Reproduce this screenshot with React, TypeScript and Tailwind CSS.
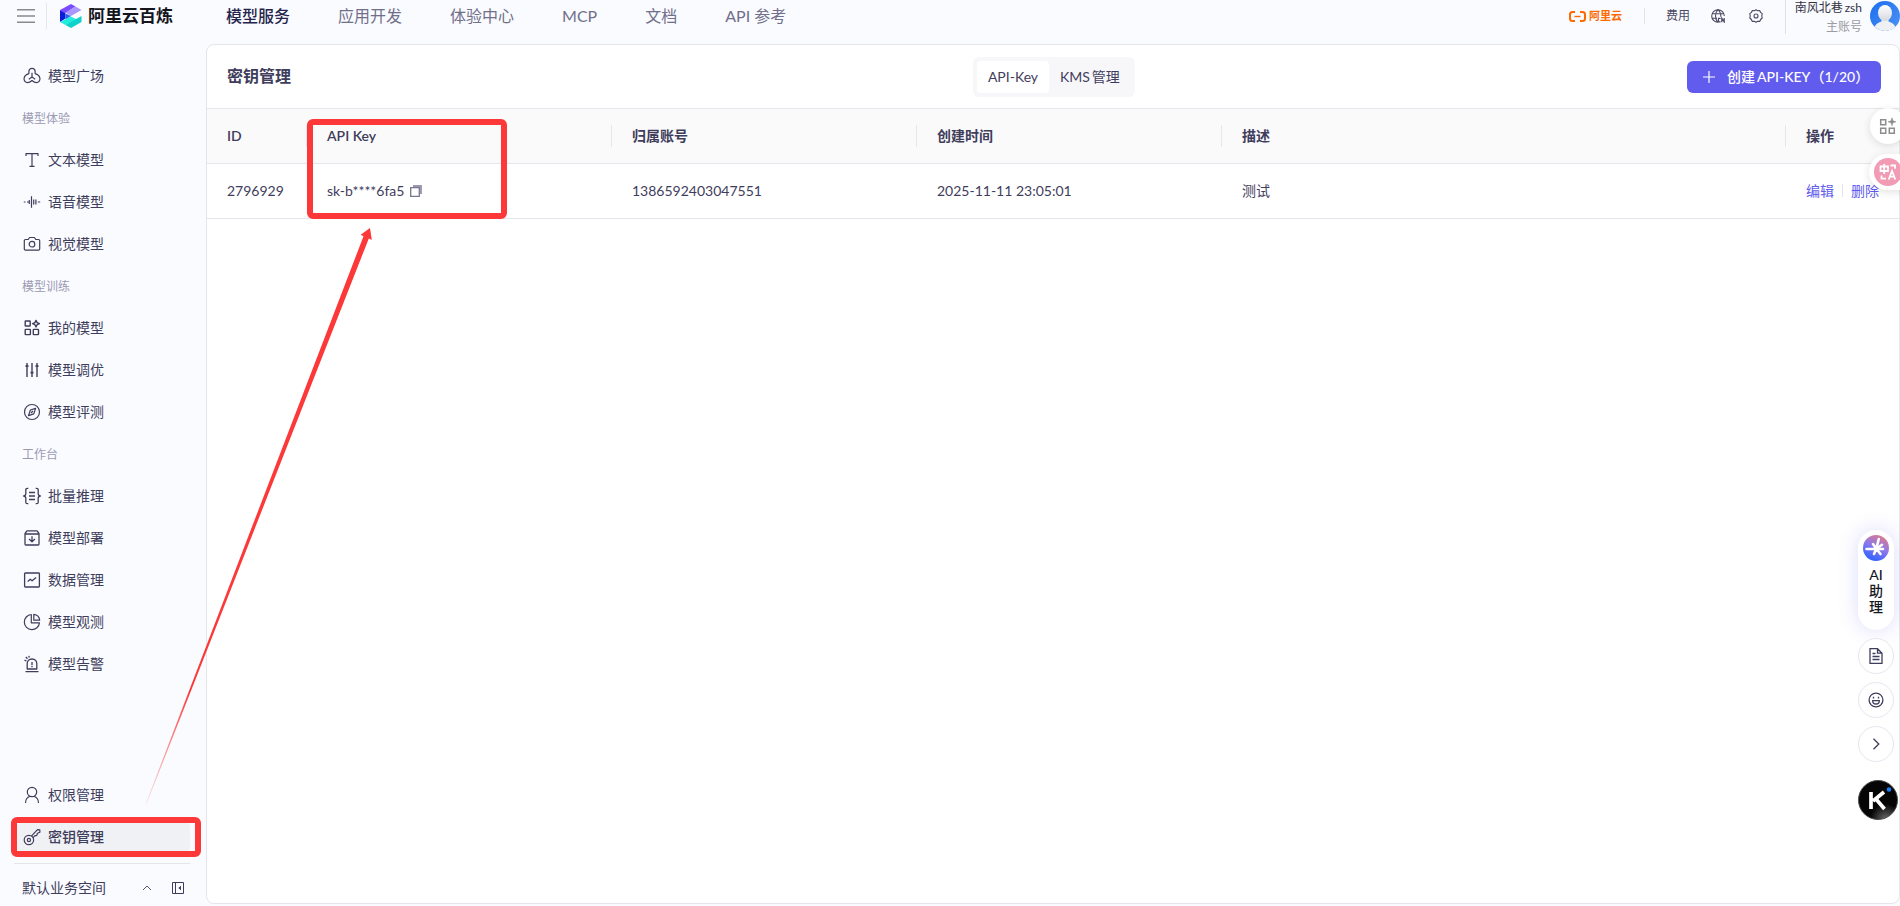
import React from "react";

type IconProps = { children: React.ReactNode; className?: string };

function Icon({ children, className = "" }: IconProps) {
  return (
    <svg
      viewBox="0 0 18 18"
      className={`h-[18px] w-[18px] shrink-0 ${className}`}
      fill="none"
      stroke="currentColor"
      strokeWidth="1.2"
      strokeLinejoin="round"
    >
      {children}
    </svg>
  );
}

const icons = {
  plaza: (
    <Icon>
      <path d="M5.900 6.600V4.300C5.900 2.500 7.200 1.300 9 1.300s3.100 1.200 3.100 3v2.300c2.200.6 4.400 2.300 4.800 4.600.4 2.700-1.300 4.400-3.500 4.400-1.700 0-2.800-.7-4.400-2.100-1.600 1.400-2.700 2.100-4.400 2.100-2.200 0-3.900-1.700-3.500-4.400.4-2.300 2.600-4 4.800-4.600z" />
      <path d="M9 5.800v4.200M9 10l-3.200 2.200M9 10l3.200 2.200" />
    </Icon>
  ),
  text: (
    <Icon>
      <path d="M3 5V2.600h12V5M9 2.600v12.800M6.500 15.400h5" />
    </Icon>
  ),
  voice: (
    <Icon>
      <path d="M.8 9h1.700M4 9h2M6.300 7v4M8.500 3.200v11.600M10.700 6.500v5M12.900 6.500v5M14.800 9h2.400" />
    </Icon>
  ),
  camera: (
    <Icon>
      <path d="M2.500 4.500h2.700l1.400-2h4.800l1.400 2h2.700c.7 0 1.200.5 1.200 1.200v8.300c0 .7-.5 1.200-1.200 1.200H2.500c-.7 0-1.200-.5-1.200-1.200V5.700c0-.7.5-1.200 1.200-1.200z" />
      <circle cx="9" cy="9.200" r="2.800" />
    </Icon>
  ),
  models: (
    <Icon>
      <g strokeWidth="1.400">
        <rect x="2.200" y="2" width="5" height="5" rx=".5" />
        <rect x="2.200" y="10.400" width="5.200" height="5.200" rx=".5" />
        <rect x="10.300" y="10.400" width="5.200" height="5.200" rx=".5" />
        <path d="M13 1.400l1.100 2.200 2.300 1-2.300 1.100-1.100 2.200-1.100-2.200-2.300-1.100 2.300-1z" />
      </g>
    </Icon>
  ),
  tune: (
    <Icon>
      <path d="M4 2v14M9 2v14M14 2v14" strokeWidth="1.400" />
      <path d="M2.500 5.200h3M7.500 11.700h3M12.500 5.200h3" strokeWidth="1.800" />
    </Icon>
  ),
  compass: (
    <Icon>
      <circle cx="9" cy="9" r="7.500" />
      <path d="M12.600 5.400L7.400 7 5.500 12.600l5.300-1.700z" />
      <path d="M8 10l2-2" />
    </Icon>
  ),
  batch: (
    <Icon>
      <g strokeWidth="1.300">
        <path d="M5.300 1.300H4.300c-1 0-1.500.6-1.500 1.500v4c0 1.200-.8 2-2.200 2.200 1.400.2 2.200 1 2.200 2.200v4c0 .9.500 1.500 1.500 1.500h1M12.700 1.300h1c1 0 1.500.6 1.500 1.500v4c0 1.200.8 2 2.200 2.200-1.400.2-2.200 1-2.200 2.200v4c0 .9-.5 1.500-1.500 1.500h-1M6 5.500h6M6 9h6M6 12.500h6" />
      </g>
    </Icon>
  ),
  deploy: (
    <Icon>
      <g strokeWidth="1.300">
        <path d="M2 4.700v10.400c0 .6.300.9.900.9h12.200c.6 0 .9-.3.900-.9V4.700L14.500 2.300c-.2-.3-.5-.4-.8-.4H4.300c-.3 0-.6.100-.8.400zM2 5h14M9 7.200v5.300M6 9.900l3 2.800 3-2.800" />
      </g>
    </Icon>
  ),
  data: (
    <Icon>
      <g strokeWidth="1.300">
        <rect x="1.600" y="2" width="14.800" height="14" rx=".8" />
        <path d="M4.700 10.600l2.500-2.400 1.900 1.600 4-3.200" />
      </g>
    </Icon>
  ),
  pie: (
    <Icon>
      <path d="M8.300 1.500a7.600 7.600 0 1 0 8.200 8.300H8.300z" />
      <path d="M10.800 1.300a6.700 6.700 0 0 1 5.900 5.900h-5.900z" />
    </Icon>
  ),
  alarm: (
    <Icon>
      <g strokeWidth="1.300">
        <path d="M4.200 14V8.600C4.200 6 6.200 4 9 4s4.800 2 4.800 4.600V14zM2.500 16.600h13M9 7v3.200M9 11v1.300M1.500 5.200l1.900.7M2.800 2l1.700 1.700M5.800 .8l.5 1.900" />
      </g>
    </Icon>
  ),
  user: (
    <Icon>
      <circle cx="9" cy="6" r="4.700" />
      <path d="M2.500 17c0-3.500 1.900-5.800 4.600-6.700M15.500 17c0-3.500-1.900-5.800-4.600-6.700" />
    </Icon>
  ),
  key: (
    <Icon>
      <circle cx="5.900" cy="12" r="4.700" />
      <circle cx="5.900" cy="12" r="1.600" />
      <path d="M8.400 8.100L14.500 1.600l2.300.2.100 2.400-2.400 1.100-.7 2-2.100.6L9.800 9.900" />
    </Icon>
  ),
};

function NavItem({ icon, label, active }: { icon: React.ReactNode; label: string; active?: boolean }) {
  return (
    <div
      className={`flex h-8 items-center gap-[7px] rounded-md pl-[9px] ${
        active ? "bg-[#f0f1f5] font-medium" : ""
      }`}
    >
      {icon}
      <span className="pb-px text-sm leading-5">{label}</span>
    </div>
  );
}

function NavHeading({ label }: { label: string }) {
  return <div className="flex h-8 items-center pt-[2px] pl-2 text-xs text-[#9c9ab3]">{label}</div>;
}

function HeaderCell({ width, label, last }: { width: string; label: string; last?: boolean }) {
  return (
    <div className={`flex shrink-0 items-center justify-between pl-5 ${width}`}>
      <span className="text-sm font-semibold">{label}</span>
      {!last && <span className="h-[22px] w-px bg-[#e6e6ec]" />}
    </div>
  );
}

function Sidebar() {
  return (
    <aside className="flex w-[206px] shrink-0 flex-col pr-4 pl-[14px] text-[#3f3d5c]">
      <nav className="flex flex-col gap-[10px] pt-4">
        <NavItem icon={icons.plaza} label="模型广场" />
        <NavHeading label="模型体验" />
        <NavItem icon={icons.text} label="文本模型" />
        <NavItem icon={icons.voice} label="语音模型" />
        <NavItem icon={icons.camera} label="视觉模型" />
        <NavHeading label="模型训练" />
        <NavItem icon={icons.models} label="我的模型" />
        <NavItem icon={icons.tune} label="模型调优" />
        <NavItem icon={icons.compass} label="模型评测" />
        <NavHeading label="工作台" />
        <NavItem icon={icons.batch} label="批量推理" />
        <NavItem icon={icons.deploy} label="模型部署" />
        <NavItem icon={icons.data} label="数据管理" />
        <NavItem icon={icons.pie} label="模型观测" />
        <NavItem icon={icons.alarm} label="模型告警" />
      </nav>
      <div className="mt-auto flex flex-col gap-[10px]">
        <NavItem icon={icons.user} label="权限管理" />
        <NavItem icon={icons.key} label="密钥管理" active />
      </div>
      <div className="mt-[10px] flex h-[43px] items-center border-t border-[#e4e5ea] pt-[5px] pl-2">
        <span className="text-sm">默认业务空间</span>
        <svg viewBox="0 0 10 6" className="ml-[36px] h-[6px] w-[10px]" fill="none" stroke="#56546f" strokeWidth="1">
          <path d="M1 5l4-4 4 4" />
        </svg>
        <svg viewBox="0 0 14 14" className="ml-[19px] h-[14px] w-[14px]" fill="none" stroke="#3f3d5c" strokeWidth="1">
          <path d="M1.500 1.500h11v11h-11z M4.500 1.500v11" />
          <path d="M10 4.700v4.600L7.300 7z" fill="#3f3d5c" stroke="none" />
        </svg>
      </div>
    </aside>
  );
}

function TopBar() {
  return (
    <header className="flex h-11 items-start">
      <div className="flex h-8 w-[226px] shrink-0 items-center pl-[17px]">
        <svg viewBox="0 0 18 14" className="h-[14px] w-[18px]" stroke="#8a8a8a" strokeWidth="1.500">
          <path d="M0 .8h18M0 7h18M0 13.200h18" />
        </svg>
        <span className="ml-[11px] h-[26px] w-px bg-[#e6e7ec]" />
        <svg viewBox="0 0 22 24" className="ml-[13px] h-6 w-[22px]">
          <path d="M0 6L11 0l4.500 2.500L5.500 9 0 12z" fill="#7a4bff" />
          <path d="M5.500 8.500L15.500 2.500 21.500 6 11 12z" fill="#ab97fb" />
          <path d="M0 6.500l5.500 3V14.500L0 18z" fill="#0b1bd6" />
          <path d="M5.500 9.500L11 12l-5.500 3.500z" fill="#2c63f5" />
          <path d="M0 18l11-5.500 5.500 3L5.500 21z" fill="#20eedc" />
          <path d="M5.500 21L21.500 12V18L11 24z" fill="#0fd2cc" />
        </svg>
        <span className="ml-[6px] pb-[2px] text-[17px] leading-none font-bold text-[#15151c]">阿里云百炼</span>
      </div>
      <nav className="flex h-[31px] items-center gap-12 text-base whitespace-nowrap text-[#716f89]">
        <span className="font-medium text-[#26244c]">模型服务</span>
        <span>应用开发</span>
        <span>体验中心</span>
        <span>MCP</span>
        <span>文档</span>
        <span>API 参考</span>
      </nav>
      <div className="ml-auto flex items-start whitespace-nowrap">
        <div className="flex h-8 items-center">
          <svg viewBox="0 0 17 11" className="h-[11px] w-[17px]" fill="none" stroke="#ff6a00" strokeWidth="2">
            <path d="M6 1H3.500C2 1 1 2 1 3.500v4C1 9 2 10 3.500 10H6M11 1h2.500C15 1 16 2 16 3.500v4c0 1.500-1 2.500-2.500 2.500H11" />
            <path d="M5.500 5.500h6" strokeWidth="1.400" />
          </svg>
          <span className="ml-[3px] text-[11px] font-bold text-[#ff6a00]">阿里云</span>
          <span className="ml-[22px] h-4 w-px bg-[#e3e4ea]" />
          <span className="ml-[21px] text-xs text-[#4a4863]">费用</span>
          <svg viewBox="0 0 14 14" className="ml-[21px] h-[14px] w-[14px]" fill="none" stroke="#4a4863" strokeWidth="1.100">
            <path d="M13.300 7A6.300 6.300 0 1 0 7 13.300M7 .7C3.700 4 3.700 10 7 13.300M7 .7c2.200 2 3 4.500 2.800 7M1.200 4.700h11.600M1.200 9.300H6" />
            <path d="M9.600 9.300H7.500v3.600h2.100M10.800 13.300V9.200l2.400 3.700V8.900" strokeWidth="1.200" />
          </svg>
          <svg viewBox="0 0 14 14" className="ml-6 h-[14px] w-[14px]" fill="none" stroke="#4a4863" strokeWidth="1.100">
            <path d="M5.300 1.700L7 .7l1.700 1 2-.1.900 1.800 1.600 1.200-.4 2.400.4 2-1.600 1.500-.9 1.900-2-.1-1.700 1-1.700-1-2 .1-.9-1.900L.8 9l.4-2-.4-2.400 1.600-1.200.9-1.800z" strokeLinejoin="round" />
            <circle cx="7" cy="7" r="2" />
          </svg>
        </div>
        <span className="ml-[22px] h-[34px] w-px bg-[#e0e1e6]" />
        <div className="flex w-[76px] flex-col items-end text-xs">
          <span className="flex h-[17px] gap-[2px] leading-[16px] text-[#33323f]">
            <span>南风北巷</span>
            <span>zsh</span>
          </span>
          <span className="leading-[19px] text-[#9b9ba3]">主账号</span>
        </div>
        <svg viewBox="0 0 30 30" className="mt-px ml-2 h-[30px] w-[30px]">
          <defs>
            <clipPath id="avatar-clip">
              <circle cx="15" cy="15" r="15" />
            </clipPath>
            <linearGradient id="avatar-bg" x1="0" y1="0" x2="1" y2="1">
              <stop offset="0" stopColor="#1a6df0" />
              <stop offset="1" stopColor="#4f93f5" />
            </linearGradient>
            <linearGradient id="avatar-head" x1="0" y1="0" x2="0" y2="1">
              <stop offset="0" stopColor="#ffffff" />
              <stop offset="1" stopColor="#d6d8dd" />
            </linearGradient>
          </defs>
          <g clipPath="url(#avatar-clip)">
            <rect width="30" height="30" fill="url(#avatar-bg)" />
            <path d="M3.500 30c.5-6 4-8 8-9.500V18h7v2.500c4 1.500 7.500 3.500 8 9.500z" fill="#eff0f2" />
            <ellipse cx="15" cy="12" rx="7" ry="8" fill="url(#avatar-head)" />
          </g>
        </svg>
      </div>
    </header>
  );
}

function KeysPanel() {
  return (
    <main className="mb-[2px] flex min-w-0 flex-1 flex-col overflow-hidden rounded-lg border border-[#e5e6eb] bg-white text-[#3f3d5c]">
      <div className="grid h-[63px] shrink-0 grid-cols-3 items-center pr-[18px] pl-5">
        <h1 className="pb-[2px] text-base font-semibold">密钥管理</h1>
        <div className="flex h-10 w-[162px] items-center justify-self-center rounded-md bg-[#f7f7fa] p-1 text-sm whitespace-nowrap">
          <span className="flex h-8 w-[72px] items-center justify-center rounded bg-white">API-Key</span>
          <span className="ml-[11px] flex items-center gap-[2px]">
            <span>KMS</span>
            <span>管理</span>
          </span>
        </div>
        <button className="flex h-8 w-[194px] items-center justify-self-end rounded-md bg-[#615ced] pl-4 text-sm font-medium whitespace-nowrap text-white">
          <svg viewBox="0 0 12 12" className="h-3 w-3" stroke="#ffffff" strokeWidth="1.200">
            <path d="M6 0v12M0 6h12" />
          </svg>
          <span className="ml-3">创建</span>
          <span className="ml-[2px]">API-KEY（1/20）</span>
        </button>
      </div>
      <div className="flex h-[56px] shrink-0 border-y border-[#e5e6eb] bg-[#fafafa]">
        <HeaderCell width="w-[100px]" label="ID" />
        <HeaderCell width="w-[305px]" label="API Key" />
        <HeaderCell width="w-[305px]" label="归属账号" />
        <HeaderCell width="w-[305px]" label="创建时间" />
        <HeaderCell width="w-[564px]" label="描述" />
        <HeaderCell width="w-[113px]" label="操作" last />
      </div>
      <div className="flex h-[55px] shrink-0 items-center border-b border-[#e5e6eb] text-sm whitespace-nowrap">
        <span className="w-[100px] shrink-0 pl-5">2796929</span>
        <span className="flex w-[305px] shrink-0 items-center gap-[6px] pl-5">
          sk-b****6fa5
          <svg viewBox="0 0 12 12" className="h-3 w-3" fill="none" stroke="#77758f">
            <path d="M.7 2.700h8.600v8.600H.7z" strokeWidth="1.300" />
            <path d="M3 1h8V9" strokeWidth="1.900" stroke="#9a98ae" />
          </svg>
        </span>
        <span className="w-[305px] shrink-0 pl-5">1386592403047551</span>
        <span className="w-[305px] shrink-0 pl-5">2025-11-11 23:05:01</span>
        <span className="w-[564px] shrink-0 pl-5">测试</span>
        <span className="flex shrink-0 items-center gap-2 pb-px pl-5 text-[#615ced]">
          编辑
          <span className="h-[13px] w-px bg-[#e3e4ea]" />
          删除
        </span>
      </div>
    </main>
  );
}

const roundButton =
  "flex h-9 w-9 items-center justify-center rounded-full border border-[#e6e6f0] bg-white text-[#3f3d5c]";

function FloatingTools() {
  return (
    <>
      <div className="absolute top-[108px] left-[1870px] flex h-9 w-9 items-center justify-center rounded-full bg-white shadow-[0_2px_8px_rgba(0,0,0,0.12)]">
        <svg viewBox="0 0 18 18" className="h-[18px] w-[18px]" fill="none" stroke="#8d8d8d" strokeWidth="1.500">
          <path d="M1.700 2.700h5v5h-5zM1.700 11.300h5v5h-5zM10.300 11.300h5v5h-5z" />
          <path d="M13 .8l1 3 3 1-3 1-1 3-1-3-3-1 3-1z" fill="#8d8d8d" stroke="#8d8d8d" strokeWidth=".5" />
        </svg>
      </div>
      <div className="absolute top-[154px] left-[1869px] flex h-9 w-[38px] items-center justify-center rounded-l-full bg-white shadow-[0_2px_8px_rgba(0,0,0,0.12)]">
        <svg viewBox="0 0 28 28" className="h-7 w-7" fill="none" stroke="#ffffff" strokeWidth="1.800">
          <circle cx="14" cy="14" r="14" fill="#f29bb4" stroke="none" />
          <path d="M6.500 8.500h7.500v4.500h-7.500zM10.200 6v10M16.500 7.500h4.500v3.200M7.500 17.500v3.200h4.500M14.700 21.500l3.300-8.500 3.300 8.500M16 18.700h4" />
        </svg>
      </div>
      <div className="absolute top-[530px] left-[1858px] flex w-10 flex-col gap-2">
        <div className="flex h-[100px] w-9 flex-col items-center rounded-full bg-white pt-[5px] shadow-[0_0_20px_rgba(97,92,237,0.22)]">
          <svg viewBox="0 0 26 26" className="h-[26px] w-[26px]">
            <defs>
              <linearGradient id="assistant-bg" x1=".8" y1="0" x2=".35" y2="1">
                <stop offset="0" stopColor="#e47c85" />
                <stop offset=".5" stopColor="#8b78ea" />
                <stop offset="1" stopColor="#2b62ff" />
              </linearGradient>
            </defs>
            <circle cx="13" cy="13" r="13" fill="url(#assistant-bg)" />
            <path
              d="M3.500 14H20M15.800 4L13.300 13.800 11 19M10 9l3.300 4.800L17.500 19M13.300 13.800L19 9.800"
              stroke="#ffffff"
              strokeWidth="2.600"
              strokeLinecap="round"
              fill="none"
            />
          </svg>
          <div className="mt-[6px] flex w-4 flex-col items-center text-sm leading-4 font-medium text-[#17171f]">
            <span>AI</span>
            <span>助</span>
            <span>理</span>
          </div>
        </div>
        <div className={roundButton}>
          <svg viewBox="0 0 16 16" className="h-4 w-4" fill="none" stroke="currentColor" strokeWidth="1.300">
            <path d="M2 .7h7.500L14 5.200v10.100H2zM9.500 .7v4.500H14M4.500 5.500h3M4.500 8.500h7M4.500 11.500h7" />
          </svg>
        </div>
        <div className={roundButton}>
          <svg viewBox="0 0 16 16" className="h-4 w-4" fill="none" stroke="currentColor" strokeWidth="1.300">
            <circle cx="8" cy="8" r="6.900" />
            <path d="M4.700 8.700h6.600c0 2-1.300 3.300-3.300 3.300s-3.300-1.300-3.300-3.300zM5.500 4.800v1.800M10.500 4.800v1.800" />
          </svg>
        </div>
        <div className={roundButton}>
          <svg viewBox="0 0 12 12" className="h-3 w-3" fill="none" stroke="currentColor" strokeWidth="1.300">
            <path d="M3.500 .7L8.800 6l-5.300 5.300" />
          </svg>
        </div>
        <svg viewBox="0 0 40 40" className="mt-[10px] h-10 w-10">
          <defs>
            <radialGradient id="k-glow" cx=".7" cy="1" r=".4">
              <stop offset="0" stopColor="#6b6b6b" />
              <stop offset="1" stopColor="#050505" />
            </radialGradient>
          </defs>
          <circle cx="20" cy="20" r="19.500" fill="url(#k-glow)" stroke="#4c4c4c" strokeWidth="1" />
          <path d="M13 12v17M26 12L15 21M18 19l8.500 10" stroke="#ffffff" strokeWidth="3.700" fill="none" />
          <circle cx="31" cy="9.500" r="2.300" fill="#1c7df5" />
        </svg>
      </div>
    </>
  );
}

function Annotations() {
  return (
    <>
      <div className="absolute top-[119px] left-[307px] h-[100px] w-[200px] rounded-[6px] border-[6px] border-[#fc3838]" />
      <div className="absolute top-[817px] left-[11px] h-[40px] w-[190px] rounded-[6px] border-[6px] border-[#fc3838]" />
      <svg viewBox="0 0 240 590" className="absolute top-[220px] left-[140px] h-[590px] w-[240px]">
        <defs>
          <linearGradient id="arrow-fade" gradientUnits="userSpaceOnUse" x1="6" y1="584" x2="50" y2="470">
            <stop offset="0" stopColor="#fc3838" stopOpacity="0.1" />
            <stop offset="1" stopColor="#fc3838" />
          </linearGradient>
        </defs>
        <path d="M5.600 584L223.500 16.300 220.700 14.800 230 8 231.800 20 228.800 18.500 6.500 584z" fill="url(#arrow-fade)" />
      </svg>
    </>
  );
}

export default function App() {
  return (
    <div className="relative flex h-[906px] w-[1900px] flex-col overflow-hidden bg-[#f9fbff] font-[Lato,'Noto_Sans_CJK_SC',sans-serif]">
      <TopBar />
      <div className="flex min-h-0 flex-1">
        <Sidebar />
        <KeysPanel />
      </div>
      <FloatingTools />
      <Annotations />
    </div>
  );
}
